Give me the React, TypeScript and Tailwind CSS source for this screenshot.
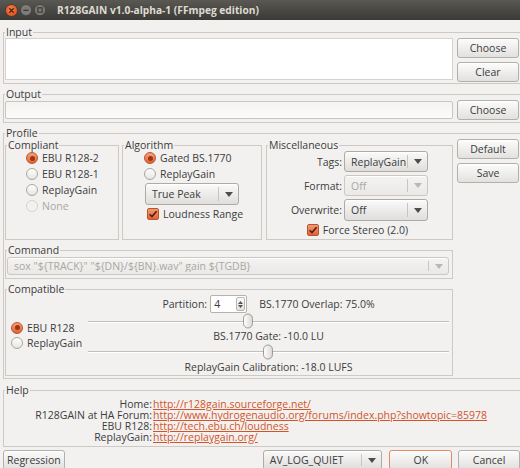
import React from "react";

type Kids = { children?: React.ReactNode; className?: string };

function Btn({ children, className = "" }: Kids) {
  return (
    <div
      className={`flex items-center justify-center rounded-[3px] border bg-linear-to-b from-[#fcfcfc] to-[#e2e1df] shadow-[inset_0_1px_0_#ffffff] ${
        className.includes("border-[") ? "" : "border-[#b3afa9]"
      } ${className}`}
    >
      {children}
    </div>
  );
}

function Arrow({ disabled }: { disabled?: boolean }) {
  return (
    <svg width="8" height="5" viewBox="0 0 8 5">
      <path d="M0 0H8L4 5Z" fill={disabled ? "#bbb8b4" : "#4d4d4d"} />
    </svg>
  );
}

function Combo({
  text,
  className = "",
  disabled = false,
}: {
  text: string;
  className?: string;
  disabled?: boolean;
}) {
  return (
    <div
      className={`flex items-center rounded-[3px] border bg-linear-to-b shadow-[inset_0_1px_0_#ffffff] ${
        disabled
          ? "border-[#cbc8c3] from-[#f4f3f2] to-[#eae9e7]"
          : "border-[#aeaaa4] from-[#fafafa] to-[#dfdedc]"
      } ${className}`}
    >
      <span className={`flex-1 truncate pl-[6px] ${disabled ? "text-[#aaa7a3]" : ""}`}>{text}</span>
      <span className="my-[3px] w-px self-stretch bg-[#c9c5c0]" />
      <span className="flex w-[19px] justify-center">
        <Arrow disabled={disabled} />
      </span>
    </div>
  );
}

function Radio({
  label,
  checked = false,
  disabled = false,
}: {
  label: string;
  checked?: boolean;
  disabled?: boolean;
}) {
  return (
    <div className="flex h-[14px] items-center gap-[4px]">
      <span
        className={`flex h-[12px] w-[12px] items-center justify-center rounded-full border ${
          checked
            ? "border-[#b9532d] bg-linear-to-b from-[#f5a07c] to-[#e3622f]"
            : disabled
            ? "border-[#d6d3cf] bg-[#f3f2f1]"
            : "border-[#a9a5a0] bg-linear-to-b from-[#ffffff] to-[#e6e5e3]"
        }`}
      >
        {checked && <span className="h-[5px] w-[5px] rounded-full bg-[#9d3511]" />}
      </span>
      <span className={`whitespace-nowrap ${disabled ? "text-[#aaa7a3]" : ""}`}>{label}</span>
    </div>
  );
}

function Check({ label }: { label: string }) {
  return (
    <div className="flex h-[14px] items-center gap-[4px]">
      <span className="flex h-[12px] w-[12px] items-center justify-center rounded-[2px] border border-[#b9532d] bg-linear-to-b from-[#f39a70] to-[#e2622f]">
        <svg width="10" height="10" viewBox="0 0 10 10">
          <path d="M1.6 5.2L4 7.6L8.6 2.2" stroke="#4a2013" strokeWidth="1.6" fill="none" />
        </svg>
      </span>
      <span className="whitespace-nowrap">{label}</span>
    </div>
  );
}

function Group({ title, className = "", children }: Kids & { title: string }) {
  return (
    <fieldset className={`min-w-0 border border-[#cdcac5] ${className}`}>
      <legend className="ml-[1px] px-[1px] leading-[12px]">{title}</legend>
      {children}
    </fieldset>
  );
}

function Slider({ center, className = "" }: { center: number; className?: string }) {
  return (
    <div className={`relative flex items-center ${className}`}>
      <div className="h-[1px] w-full bg-[#c2beb9] shadow-[0_1px_0_#ffffff]" />
      <div
        className="absolute top-1/2 h-[15px] w-[10px] -translate-y-1/2 rounded-[5px] border border-[#9c9893] bg-linear-to-r from-[#fdfdfd] to-[#dcdad7]"
        style={{ left: center - 5 }}
      />
    </div>
  );
}

function Spin() {
  return (
    <div className="ml-[3px] flex h-[18px] w-[37px] items-center rounded-[2px] border border-[#b5b1ab] bg-white">
      <span className="flex-1 pl-[3px]">4</span>
      <span className="mr-[1px] flex h-[14px] w-[9px] flex-col items-center justify-center gap-[1px] rounded-[2px] border border-[#b9b5b0] bg-linear-to-b from-[#fbfbfb] to-[#e2e1df]">
        <svg width="5" height="3" viewBox="0 0 5 3">
          <path d="M0 3H5L2.5 0Z" fill="#555" />
        </svg>
        <svg width="5" height="3" viewBox="0 0 5 3">
          <path d="M0 0H5L2.5 3Z" fill="#555" />
        </svg>
      </span>
    </div>
  );
}

function TitleBar() {
  return (
    <div className="flex h-[20px] items-center bg-linear-to-b from-[#5a5853] to-[#3b3a36]">
      <div className="flex items-center gap-[2px] pl-[5px]">
        <svg width="13" height="13" viewBox="0 0 13 13">
          <defs>
            <radialGradient id="cl" cx="0.45" cy="0.4" r="0.6">
              <stop offset="0" stopColor="#f7884f" />
              <stop offset="1" stopColor="#d9501f" />
            </radialGradient>
          </defs>
          <circle cx="6.5" cy="6.5" r="6" fill="url(#cl)" stroke="#3a2a20" strokeWidth="0.6" />
          <path d="M4.3 4.3L8.7 8.7M8.7 4.3L4.3 8.7" stroke="#5a2410" strokeWidth="1.4" />
        </svg>
        <svg width="12" height="12" viewBox="0 0 12 12">
          <circle cx="6" cy="6" r="5.5" fill="#7e7c77" stroke="#3a3935" strokeWidth="0.6" />
          <path d="M3.5 6.3H8.5" stroke="#3c3b37" strokeWidth="1.4" />
        </svg>
        <svg width="12" height="12" viewBox="0 0 12 12">
          <circle cx="6" cy="6" r="5.5" fill="#7e7c77" stroke="#3a3935" strokeWidth="0.6" />
          <rect x="3.8" y="3.8" width="4.4" height="4.4" fill="none" stroke="#3c3b37" strokeWidth="1.2" />
        </svg>
      </div>
      <span className="ml-[11px] whitespace-nowrap text-[10.2px] font-bold text-[#dfdbd2]">
        R128GAIN v1.0-alpha-1 (FFmpeg edition)
      </span>
    </div>
  );
}

export default function App() {
  return (
    <div className="h-[468px] w-[520px] overflow-hidden bg-[#f2f1f0] font-['Open_Sans',sans-serif] text-[10.5px] leading-[12px] text-[#3c3c3c]">
      <TitleBar />
      <div className="flex flex-col pl-[3px]">
        <Group title="Input" className="mt-[6px] h-[58px] border-r-0">
          <div className="flex gap-[4px] pl-[1px]">
            <div className="h-[42px] w-[448px] border border-[#d6d3ce] bg-white" />
            <div className="flex flex-col gap-[4px]">
              <Btn className="h-[20px] w-[62px]">Choose</Btn>
              <Btn className="h-[20px] w-[62px]">Clear</Btn>
            </div>
          </div>
        </Group>

        <Group title="Output" className="mt-[4px] h-[35px] border-r-0">
          <div className="flex items-center gap-[4px] pl-[1px]">
            <div className="h-[18px] w-[448px] rounded-[2px] border border-[#c9c5c0] bg-linear-to-b from-[#f4f3f2] to-[#fbfbfb]" />
            <Btn className="h-[20px] w-[62px]">Choose</Btn>
          </div>
        </Group>

        <Group title="Profile" className="mt-[4px] border-r-0">
          <div className="flex gap-[4px] pb-[2px] pl-[1px]">
            <div className="flex w-[448px] flex-col gap-[4px]">
              <div className="flex h-[101px]">
                <Group title="Compliant" className="h-full w-[114px]">
                  <div className="flex flex-col gap-[2px] pl-[20px]">
                    <Radio checked label="EBU R128-2" />
                    <Radio label="EBU R128-1" />
                    <Radio label="ReplayGain" />
                    <Radio disabled label="None" />
                  </div>
                </Group>
                <Group title="Algorithm" className="ml-[3px] h-full w-[140px]">
                  <div className="flex flex-col gap-[2px] pl-[21px]">
                    <Radio checked label="Gated BS.1770" />
                    <Radio label="ReplayGain" />
                    <Combo text="True Peak" className="ml-[1px] h-[22px] w-[94px]" />
                    <div className="ml-[3px]">
                      <Check label="Loudness Range" />
                    </div>
                  </div>
                </Group>
                <Group title="Miscellaneous" className="ml-[4px] h-full w-[187px]">
                  <div className="grid grid-cols-[75px_84px] items-center gap-x-[2px] gap-y-[3px]">
                    <span className="text-right">Tags:</span>
                    <Combo text="ReplayGain" className="h-[21px]" />
                    <span className="text-right">Format:</span>
                    <Combo text="Off" disabled className="h-[21px]" />
                    <span className="text-right">Overwrite:</span>
                    <Combo text="Off" className="h-[22px]" />
                  </div>
                  <div className="mt-[2px] flex justify-center pr-[4px]">
                    <Check label="Force Stereo (2.0)" />
                  </div>
                </Group>
              </div>

              <Group title="Command" className="h-[35px]">
                <Combo
                  disabled
                  text={'sox "${TRACK}" "${DN}/${BN}.wav" gain ${TGDB}'}
                  className="ml-[1px] mr-[3px] mt-[1px] h-[18px]"
                />
              </Group>

              <Group title="Compatible" className="h-[93px]">
                <div className="flex h-[80px]">
                  <div className="flex w-[82px] flex-col justify-center gap-[1px] pl-[5px]">
                    <Radio checked label="EBU R128" />
                    <Radio label="ReplayGain" />
                  </div>
                  <div className="flex w-[361px] flex-col">
                    <div className="flex h-[18px] items-center justify-center">
                      <span>Partition:</span>
                      <Spin />
                      <span className="ml-[12px]">BS.1770 Overlap: 75.0%</span>
                    </div>
                    <Slider center={160} className="h-[16px]" />
                    <div className="h-[14px] text-center leading-[14px]">BS.1770 Gate: -10.0 LU</div>
                    <Slider center={180} className="h-[17px]" />
                    <div className="h-[15px] text-center leading-[15px]">
                      ReplayGain Calibration: -18.0 LUFS
                    </div>
                  </div>
                </div>
              </Group>
            </div>
            <div className="flex flex-col gap-[4px]">
              <Btn className="h-[20px] w-[62px]">Default</Btn>
              <Btn className="h-[20px] w-[62px]">Save</Btn>
            </div>
          </div>
        </Group>

        <Group title="Help" className="mt-[5px] h-[63px] border-r-0">
          <div className="grid grid-cols-[148px_auto] pt-[3px] leading-[11px]">
            <span className="text-right">Home:</span>
            <span className="pl-[1px] text-[#d2542a] underline">http://r128gain.sourceforge.net/</span>
            <span className="text-right">R128GAIN at HA Forum:</span>
            <span className="pl-[1px] text-[#d2542a] underline">
              http://www.hydrogenaudio.org/forums/index.php?showtopic=85978
            </span>
            <span className="text-right">EBU R128:</span>
            <span className="pl-[1px] text-[#d2542a] underline">http://tech.ebu.ch/loudness</span>
            <span className="text-right">ReplayGain:</span>
            <span className="pl-[1px] text-[#d2542a] underline">http://replaygain.org/</span>
          </div>
        </Group>

        <div className="mt-[3px] flex items-start">
          <Btn className="h-[20px] w-[62px]">Regression</Btn>
          <Combo text="AV_LOG_QUIET" className="ml-[198px] h-[20px] w-[120px]" />
          <Btn className="ml-[7px] h-[20px] w-[63px] border-[#e48a62]">OK</Btn>
          <Btn className="ml-[6px] h-[20px] w-[62px]">Cancel</Btn>
        </div>
      </div>
    </div>
  );
}
